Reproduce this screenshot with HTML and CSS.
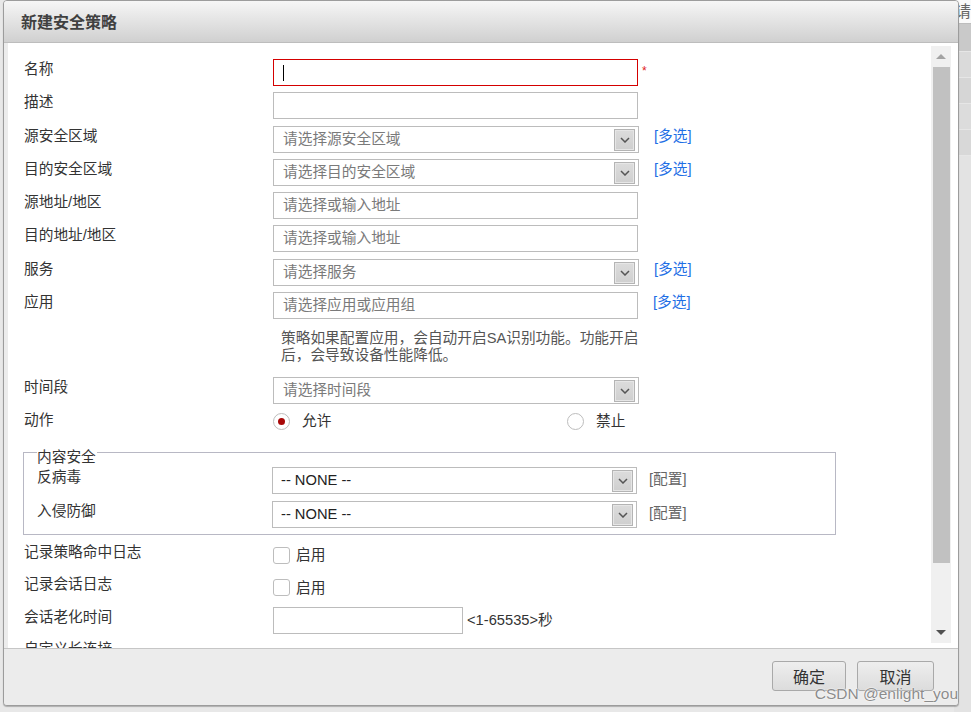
FILE: index.html
```html
<!DOCTYPE html>
<html lang="zh">
<head>
<meta charset="utf-8">
<title>新建安全策略</title>
<link rel="stylesheet" href="styles.css">
</head>
<body>
<div class="page">
  <div class="page-main"></div>
  <div class="page-side">
    <div class="side-head">请</div>
    <div class="side-row s1"></div>
    <div class="side-row s2"></div>
    <div class="side-row s3"></div>
    <div class="side-row s4"></div>
    <div class="side-row s5"></div>
  </div>
</div>

<div class="dialog">
  <div class="titlebar">新建安全策略</div>
  <div class="dbody">
    <div class="content">
      <div class="form">
        <div class="row">
          <div class="label">名称</div>
          <div class="ctrl">
            <div class="input focus"><span class="caret"></span></div>
            <span class="req">*</span>
          </div>
        </div>
        <div class="row">
          <div class="label">描述</div>
          <div class="ctrl"><div class="input"></div></div>
        </div>
        <div class="row">
          <div class="label">源安全区域</div>
          <div class="ctrl">
            <div class="select"><span class="ph">请选择源安全区域</span><span class="dd"><svg width="10" height="6" viewBox="0 0 10 6"><path d="M1 1 L5 5 L9 1" fill="none" stroke="#555" stroke-width="1.5"/></svg></span></div>
            <span class="multi">[多选]</span>
          </div>
        </div>
        <div class="row">
          <div class="label">目的安全区域</div>
          <div class="ctrl">
            <div class="select"><span class="ph">请选择目的安全区域</span><span class="dd"><svg width="10" height="6" viewBox="0 0 10 6"><path d="M1 1 L5 5 L9 1" fill="none" stroke="#555" stroke-width="1.5"/></svg></span></div>
            <span class="multi">[多选]</span>
          </div>
        </div>
        <div class="row">
          <div class="label">源地址/地区</div>
          <div class="ctrl"><div class="input"><span class="ph">请选择或输入地址</span></div></div>
        </div>
        <div class="row">
          <div class="label">目的地址/地区</div>
          <div class="ctrl"><div class="input"><span class="ph">请选择或输入地址</span></div></div>
        </div>
        <div class="row">
          <div class="label">服务</div>
          <div class="ctrl">
            <div class="select"><span class="ph">请选择服务</span><span class="dd"><svg width="10" height="6" viewBox="0 0 10 6"><path d="M1 1 L5 5 L9 1" fill="none" stroke="#555" stroke-width="1.5"/></svg></span></div>
            <span class="multi">[多选]</span>
          </div>
        </div>
        <div class="row">
          <div class="label">应用</div>
          <div class="ctrl">
            <div class="input"><span class="ph">请选择应用或应用组</span></div>
            <span class="multi">[多选]</span>
          </div>
        </div>
        <div class="hint">策略如果配置应用，会自动开启SA识别功能。功能开启后，会导致设备性能降低。</div>
        <div class="row">
          <div class="label">时间段</div>
          <div class="ctrl">
            <div class="select"><span class="ph">请选择时间段</span><span class="dd"><svg width="10" height="6" viewBox="0 0 10 6"><path d="M1 1 L5 5 L9 1" fill="none" stroke="#555" stroke-width="1.5"/></svg></span></div>
          </div>
        </div>
        <div class="row">
          <div class="label">动作</div>
          <div class="ctrl radios">
            <div class="opt"><span class="radio on"></span><span class="opt-text">允许</span></div>
            <div class="opt"><span class="radio"></span><span class="opt-text">禁止</span></div>
          </div>
        </div>

        <fieldset class="group">
          <legend>内容安全</legend>
          <div class="frow">
            <div class="flabel">反病毒</div>
            <div class="select dark"><span>-- NONE --</span><span class="dd"><svg width="10" height="6" viewBox="0 0 10 6"><path d="M1 1 L5 5 L9 1" fill="none" stroke="#555" stroke-width="1.5"/></svg></span></div>
            <span class="cfg">[配置]</span>
          </div>
          <div class="frow last">
            <div class="flabel">入侵防御</div>
            <div class="select dark"><span>-- NONE --</span><span class="dd"><svg width="10" height="6" viewBox="0 0 10 6"><path d="M1 1 L5 5 L9 1" fill="none" stroke="#555" stroke-width="1.5"/></svg></span></div>
            <span class="cfg">[配置]</span>
          </div>
        </fieldset>

        <div class="row short">
          <div class="label">记录策略命中日志</div>
          <div class="ctrl checkline"><span class="check"></span><span class="check-text">启用</span></div>
        </div>
        <div class="row short">
          <div class="label">记录会话日志</div>
          <div class="ctrl checkline"><span class="check"></span><span class="check-text">启用</span></div>
        </div>
        <div class="row short">
          <div class="label">会话老化时间</div>
          <div class="ctrl">
            <div class="input narrow"></div>
            <span class="unit">&lt;1-65535&gt;秒</span>
          </div>
        </div>
        <div class="row short">
          <div class="label">自定义长连接</div>
        </div>
      </div>
    </div>
    <div class="scrollbar">
      <div class="sb-up"><span class="tri-up"></span></div>
      <div class="sb-thumb"></div>
      <div class="sb-track"></div>
      <div class="sb-down"><span class="tri-down"></span></div>
    </div>
  </div>
  <div class="footer">
    <button class="btn ok">确定</button>
    <button class="btn cancel">取消</button>
  </div>
  <div class="watermark">CSDN @enlight_you</div>
</div>
</body>
</html>
```

FILE: styles.css
```css
html, body {
  margin: 0;
  padding: 0;
}
body {
  width: 971px;
  height: 712px;
  overflow: hidden;
  background: #e4e4e4;
  font-family: "Liberation Sans", "Noto Sans CJK SC", sans-serif;
  font-size: 14.7px;
  color: #333;
  position: relative;
}

/* background page */
.page {
  display: flex;
  height: 712px;
}
.page-main {
  width: 959px;
  background: #e8e8e8;
}
.page-side {
  flex: 1;
  display: flex;
  flex-direction: column;
  background: #e3e3e3;
}
.side-head {
  height: 23px;
  background: #fafafa;
  border-bottom: 1px solid #bdbdbd;
  color: #666;
  font-size: 16px;
  line-height: 20px;
  padding-left: 1px;
  overflow: hidden;
  font-family: "Noto Sans CJK SC", sans-serif;
}
.side-row {
  height: 25px;
  border-bottom: 1px solid #e6e6e6;
}
.s1 { background: #c9c9c9; height: 27px; }
.s2 { background: #dadada; }
.s3 { background: #d6d6d6; }
.s4 { background: #dcdcdc; }
.s5 { background: #d8d8d8; }

/* dialog window */
.dialog {
  position: absolute;
  left: 3px;
  top: 0;
  width: 956px;
  height: 706px;
  box-sizing: border-box;
  border: 1px solid #9c9c9c;
  border-radius: 4px;
  background: #ececec;
  display: flex;
  flex-direction: column;
  box-shadow: 0 1px 1px rgba(0,0,0,0.25);
}
.titlebar {
  height: 42px;
  box-sizing: border-box;
  border-bottom: 1px solid #bdbdbd;
  border-radius: 3px 3px 0 0;
  background: linear-gradient(#f6f6f6, #d0d0d0);
  padding-left: 17px;
  line-height: 41px;
  font-size: 16px;
  font-weight: 700;
  color: #404040;
  font-family: "Noto Sans CJK SC", sans-serif;
}
.dbody {
  height: 605px;
  display: flex;
  background: #fff;
  border-left: 4px solid #ececec;
}
.content {
  flex: 1;
  overflow: hidden;
}
.form {
  padding: 13px 0 0 16px;
}
.row {
  display: flex;
  height: 33.3px;
}
.row.short {
  height: 32.5px;
}
.label {
  width: 249px;
  flex: none;
  margin-top: 3px;
  line-height: 20px;
  white-space: nowrap;
}
.ctrl {
  margin-top: 3px;
  display: flex;
  align-items: flex-start;
}
.input {
  width: 365px;
  height: 27px;
  box-sizing: border-box;
  border: 1px solid #bcbcbc;
  padding-left: 9px;
  line-height: 25px;
  background: #fff;
  display: flex;
}
.input.focus {
  border-color: #d40000;
}
.input.narrow {
  width: 190px;
}
.caret {
  width: 1px;
  height: 16px;
  background: #000;
  margin-top: 5px;
}
.ph {
  color: #7a7a7a;
  white-space: nowrap;
}
.req {
  color: #e0201a;
  font-size: 12px;
  line-height: 14px;
  margin: 5px 0 0 4px;
}
.select {
  width: 366px;
  height: 27px;
  flex: none;
  box-sizing: border-box;
  border: 1px solid #bcbcbc;
  padding-left: 9px;
  line-height: 25px;
  display: flex;
  justify-content: space-between;
  align-items: flex-start;
  background: #fff;
}
.select.dark {
  width: 365px;
  color: #222;
  padding-left: 8px;
}
.dd {
  width: 21px;
  height: 22px;
  box-sizing: border-box;
  margin: 2px 3px 0 0;
  border: 1px solid #b4b4b4;
  background: linear-gradient(#dcdcdc, #cfcfcf);
  box-shadow: inset 0 0 0 1px #e6e6e6;
  display: flex;
  align-items: center;
  justify-content: center;
}
.multi {
  margin-left: 15px;
  color: #1f6fe5;
  line-height: 20px;
  white-space: nowrap;
}
.hint {
  margin: 8px 0 9.5px 257px;
  width: 370px;
  line-height: 17px;
  color: #555;
}
.radios {
  height: 20px;
  align-items: center;
  margin-top: 4px;
}
.opt {
  width: 294px;
  display: flex;
  align-items: center;
}
.radio {
  width: 17px;
  height: 17px;
  box-sizing: border-box;
  border: 1px solid #bdbdbd;
  border-radius: 50%;
  background: #fff;
  display: flex;
  align-items: center;
  justify-content: center;
}
.radio.on::after {
  content: "";
  width: 7px;
  height: 7px;
  border-radius: 50%;
  background: #a80808;
}
.opt-text {
  margin-left: 12px;
  line-height: 20px;
}

/* fieldset */
.group {
  margin: -1.6px 0 4px -1px;
  width: 813px;
  box-sizing: border-box;
  border: 1px solid #b8b8c4;
  padding: 0 0 0 13px;
  min-inline-size: 0;
}
.group legend {
  padding: 8px 1px 0 0;
  line-height: 20px;
  color: #333;
}
.frow {
  display: flex;
  height: 34px;
}
.frow.last {
  height: 33px;
}
.flabel {
  width: 235px;
  flex: none;
  line-height: 20px;
}
.cfg {
  margin: 2px 0 0 12px;
  line-height: 20px;
  color: #666;
  white-space: nowrap;
}

.checkline {
  height: 27px;
  align-items: center;
}
.check {
  width: 17px;
  height: 17px;
  box-sizing: border-box;
  border: 1px solid #bdbdbd;
  border-radius: 3px;
  background: #fff;
}
.check-text {
  margin-left: 6px;
  line-height: 20px;
}
.unit {
  margin-left: 4px;
  line-height: 27px;
  white-space: nowrap;
}

/* fake scrollbar */
.scrollbar {
  width: 20px;
  margin: 3px 7px 5px 0;
  background: #f0f0f0;
  display: flex;
  flex-direction: column;
}
.sb-up, .sb-down {
  display: flex;
  align-items: center;
  justify-content: center;
}
.sb-up { height: 21px; }
.sb-down { height: 22px; }
.tri-up {
  width: 0;
  height: 0;
  border-left: 5px solid transparent;
  border-right: 5px solid transparent;
  border-bottom: 5px solid #a3a3a3;
}
.tri-down {
  width: 0;
  height: 0;
  border-left: 5px solid transparent;
  border-right: 5px solid transparent;
  border-top: 5px solid #505050;
}
.sb-thumb {
  height: 496px;
  margin: 0 1px 0 2px;
  background: #c1c1c1;
}
.sb-track {
  flex: 1;
}

/* footer */
.footer {
  flex: 1;
  border-top: 1px solid #c6c6c6;
  border-radius: 0 0 3px 3px;
  background: #ececec;
  display: flex;
  justify-content: flex-end;
  align-items: flex-start;
  padding: 12px 24px 0 0;
  gap: 11px;
}
.btn {
  height: 30px;
  box-sizing: border-box;
  border: 1px solid #a9a9a9;
  border-radius: 3px;
  background: linear-gradient(#eeeeee, #dcdcdc);
  font-family: "Noto Sans CJK SC", sans-serif;
  font-size: 16px;
  color: #333;
  padding: 0;
  line-height: 26px;
}
.btn.ok { width: 74px; }
.btn.cancel { width: 77px; }

.watermark {
  position: absolute;
  right: 0;
  bottom: 2px;
  font-size: 15.5px;
  line-height: 18px;
  color: #8c8c8c;
  text-shadow: 0 0 2px #fff, 0 0 1px #fff;
  white-space: nowrap;
}
```
